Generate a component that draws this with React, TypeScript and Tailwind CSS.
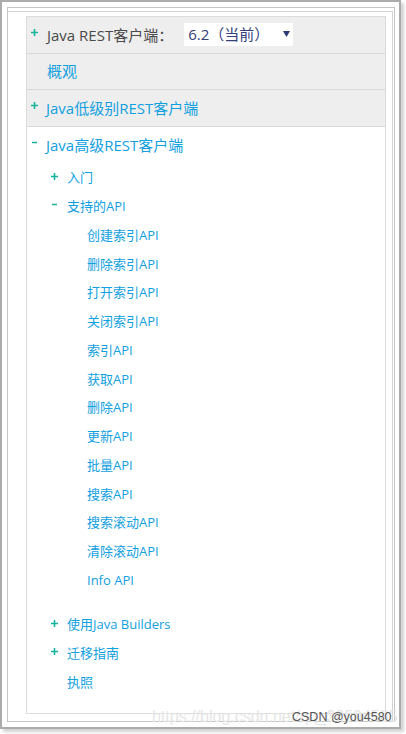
import React from "react";

const font = { fontFamily: '"Open Sans", "Noto Sans CJK SC", sans-serif' };

const children = [
  "创建索引API",
  "删除索引API",
  "打开索引API",
  "关闭索引API",
  "索引API",
  "获取API",
  "删除API",
  "更新API",
  "批量API",
  "搜索API",
  "搜索滚动API",
  "清除滚动API",
  "Info API",
];

function Plus({ cls = "" }: { cls?: string }) {
  return (
    <svg width="7" height="7" viewBox="0 0 7 7" className={cls}>
      <path d="M3.5 0V7M0 3.5H7" stroke="#19b39d" strokeWidth="1.6" />
    </svg>
  );
}
function Minus({ cls = "" }: { cls?: string }) {
  return (
    <svg width="7" height="7" viewBox="0 0 7 7" className={cls}>
      <path d="M1 3.5H6" stroke="#19b39d" strokeWidth="1.5" />
    </svg>
  );
}

export default function App() {
  return (
    <div className="relative w-[406px] h-[734px] bg-white" style={font}>
      <div className="w-[401px] h-[729px] border-2 border-[#acacac] shadow-[3px_3px_3px_rgba(0,0,0,0.18)] pl-[5px] pt-[5px]">
        <div className="w-[388px] h-[715px] border border-[#c4c4c4]">
          <div className="mt-[3px] mr-[1px] h-[710px] border-t border-r border-[#d4d4d4]">
            <div className="ml-[18px] mt-[4px] w-[360px] h-[698px] border border-[#dcdcdc] flex flex-col">
              {/* Row 1 */}
              <div className="h-[37px] bg-[#eeeeee] border-b border-[#dadada] flex items-center">
                <Plus cls="ml-[4px] mr-[9px] -mt-[5px]" />
                <span className="text-[15px] text-[#4a4a4a] leading-none">Java REST客户端：</span>
                <div className="ml-[11px] h-[23px] w-[109px] bg-white flex items-center pl-[4px] mt-[-2px]">
                  <span className="text-[15px] text-[#34407a] leading-none">6.2（当前）</span>
                  <svg width="7" height="6" viewBox="0 0 7 6" className="ml-[14px] mt-[-1px]">
                    <path d="M0 0H7L3.5 6Z" fill="#2c3a78" />
                  </svg>
                </div>
              </div>
              {/* Row 2 */}
              <div className="h-[36px] bg-[#eeeeee] border-b border-[#dadada] flex items-center pl-[20px]">
                <span className="text-[15px] text-[#12a0df] leading-none">概观</span>
              </div>
              {/* Row 3 */}
              <div className="h-[37px] bg-[#eeeeee] border-b border-[#dadada] flex items-center">
                <Plus cls="ml-[4px] mr-[8px] -mt-[5px]" />
                <span className="text-[15px] text-[#12a0df] leading-none">Java低级别REST客户端</span>
              </div>
              {/* Row 4 */}
              <div className="h-[36px] flex items-center">
                <Minus cls="ml-[4px] mr-[8px] -mt-[6px]" />
                <span className="text-[15px] text-[#12a0df] leading-none">Java高级REST客户端</span>
              </div>
              <div className="h-[29px] flex items-center">
                <Plus cls="ml-[24px] mr-[9px] -mt-[3px]" />
                <span className="text-[13px] text-[#12a0df] leading-none">入门</span>
              </div>
              <div className="h-[29px] flex items-center">
                <Minus cls="ml-[24px] mr-[9px] -mt-[4px]" />
                <span className="text-[13px] text-[#12a0df] leading-none">支持的API</span>
              </div>
              {children.map((c) => (
                <div key={c} className="h-[28.75px] flex items-center pl-[60px]">
                  <span className="text-[13px] text-[#12a0df] leading-none">{c}</span>
                </div>
              ))}
              <div className="h-[16px]" />
              <div className="h-[28px] flex items-center">
                <Plus cls="ml-[24px] mr-[9px] -mt-[3px]" />
                <span className="text-[13px] text-[#12a0df] leading-none">使用Java Builders</span>
              </div>
              <div className="h-[29px] flex items-center">
                <Plus cls="ml-[24px] mr-[9px] -mt-[3px]" />
                <span className="text-[13px] text-[#12a0df] leading-none">迁移指南</span>
              </div>
              <div className="h-[29px] flex items-center pl-[40px]">
                <span className="text-[13px] text-[#12a0df] leading-none">执照</span>
              </div>
            </div>
          </div>
        </div>
      </div>
      {/* watermark */}
      <div
        className="absolute left-[152px] top-[709px] text-[16px] text-[#e6e6e6] leading-none whitespace-nowrap"
        style={{ fontFamily: '"Liberation Sans", Arial, sans-serif' }}
      >
        https://blog.csdn.net/qq_38504585
      </div>
      <div
        className="absolute left-[292px] top-[711px] text-[12.5px] text-[#555555] leading-none whitespace-nowrap"
        style={{ fontFamily: '"Liberation Sans", Arial, sans-serif' }}
      >
        CSDN @you4580
      </div>
    </div>
  );
}
